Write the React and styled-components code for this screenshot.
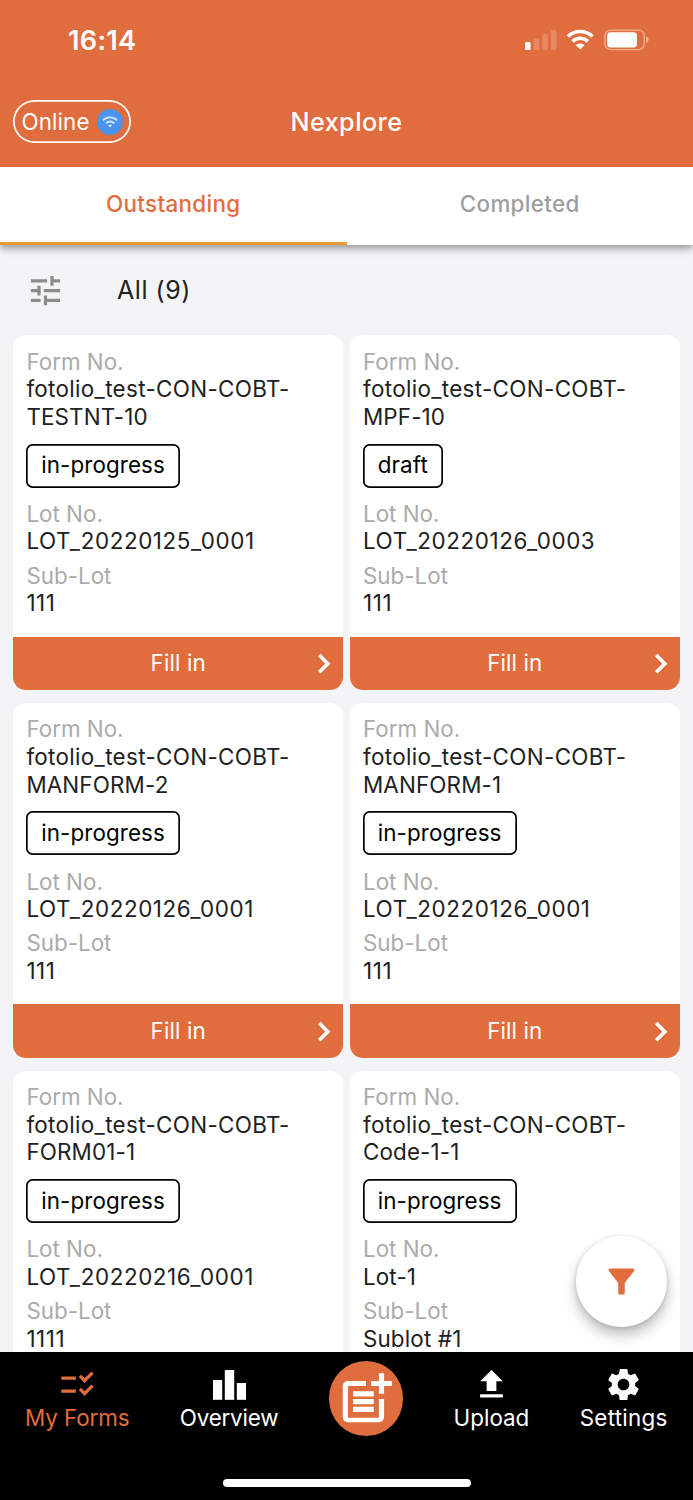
import React from 'react'
import styled, { createGlobalStyle, ThemeProvider } from 'styled-components'
import {
  MdTune,
  MdFilterAlt,
  MdChecklistRtl,
  MdPostAdd,
  MdSettings,
  MdUpload,
} from 'react-icons/md'

const theme = {
  orange: '#e06d3d',
  amber: '#e99a33',
  blue: '#4a94ec',
  grey: '#ababab',
  text: '#212121',
  page: '#f4f4f7',
}

const GlobalStyle = createGlobalStyle`
  * {
    box-sizing: border-box;
  }

  body {
    background: #f4f4f7;
    font-family: Inter, "Liberation Sans", sans-serif;
    margin: 0;
    overflow: hidden;
  }
`

const Screen = styled.div`
  background-color: ${props => props.theme.page};
  display: flex;
  flex-direction: column;
  height: 1500px;
  position: relative;
  width: 693px;
`

const Header = styled.header`
  background-color: ${props => props.theme.orange};
  color: #fff;
  flex: none;
  height: 166.7px;
  position: relative;
  z-index: 1;
`

const StatusBar = styled.div`
  align-items: center;
  display: flex;
  height: 79px;
  justify-content: space-between;
  padding: 0 44px 0 68px;
`

const Clock = styled.span`
  font-size: 27.2px;
  font-weight: 600;
  letter-spacing: 0.25px;
  padding-top: 1px;
`

const StatusIcons = styled.svg`
  display: block;
  height: 24px;
  width: 125px;
`

const AppBar = styled.div`
  align-items: center;
  display: grid;
  grid-template-columns: 1fr auto 1fr;
  height: 85px;
  padding: 0 13px;
`

const Online = styled.div`
  align-items: center;
  border-radius: 22px;
  box-shadow: inset 0 0 0 1.7px #fff;
  display: flex;
  font-size: 22.4px;
  height: 42.5px;
  justify-content: space-between;
  letter-spacing: 0.1px;
  line-height: 26px;
  padding: 0 7.6px 0 8.5px;
  width: 118px;
`

const OnlineDot = styled.svg`
  height: 26px;
  width: 26px;
`

const Title = styled.h1`
  font-size: 25.2px;
  font-weight: 500;
  letter-spacing: 0.45px;
  margin: 0;
`

const Tabs = styled.nav`
  background-color: #fff;
  box-shadow: 0 3px 8px rgba(0, 0, 0, 0.42);
  display: flex;
  flex: none;
  height: 78.3px;
`

const Tab = styled.div`
  align-items: center;
  border-bottom: 3.5px solid ${props => props.$active ? props.theme.amber : 'transparent'};
  color: ${props => props.$active ? props.theme.orange : '#9e9e9e'};
  display: flex;
  flex: 1;
  font-size: 22.4px;
  font-weight: 500;
  justify-content: center;
  letter-spacing: 0.35px;
  padding-bottom: 2px;
`

const Toolbar = styled.div`
  align-items: center;
  color: ${props => props.theme.text};
  display: flex;
  flex: none;
  font-size: 25px;
  gap: 52px;
  height: 90.5px;
  letter-spacing: 0.55px;
  padding-left: 26px;

  svg {
    color: #8c8c8c;
  }
`

const Grid = styled.main`
  align-content: start;
  display: grid;
  flex: 1;
  gap: 13.2px 6.6px;
  grid-template-columns: 330px 330px;
  min-height: 0;
  overflow: hidden;
  padding: 0 13.2px;
`

const Card = styled.article`
  background-color: #fff;
  border-radius: 13px;
  color: ${props => props.theme.text};
  display: flex;
  flex-direction: column;
  font-size: 22.4px;
  height: 354.5px;
  letter-spacing: 0.1px;
  line-height: 27.6px;
  overflow: hidden;
`

const CardBody = styled.div`
  flex: 1;
  padding: 12.3px 13.2px 0;
`

const Field = styled.div`
  margin-bottom: 6.6px;
`

const Label = styled.div`
  color: ${props => props.theme.grey};
  letter-spacing: 0;
`

const Value = styled.div`
  letter-spacing: ${props => props.$code ? '0.6px' : '0.15px'};
  white-space: pre-line;

  &::first-line {
    letter-spacing: ${props => props.$name ? '0.34px' : 'inherit'};
  }
`

const Badge = styled.span`
  align-items: center;
  border-radius: 6.6px;
  box-shadow: inset 0 0 0 1.7px #000;
  color: #000;
  display: inline-flex;
  height: 44px;
  margin: 6.6px 0 12.1px;
  padding: 0 15.4px 1px 14.8px;
`

const FillButton = styled.button`
  align-items: center;
  background-color: ${props => props.theme.orange};
  border: none;
  color: #fff;
  display: grid;
  flex: none;
  font: inherit;
  grid-template-columns: 39px 1fr 39px;
  height: 53.3px;
  letter-spacing: inherit;
  padding: 0;
  text-align: center;

  span {
    padding-bottom: 1px;
  }
`

const FilterButton = styled.button`
  align-items: center;
  background-color: #fff;
  border: none;
  border-radius: 50%;
  bottom: 173.5px;
  box-shadow: 0 8px 14px rgba(0, 0, 0, 0.26), 0 1px 4px rgba(0, 0, 0, 0.14);
  color: ${props => props.theme.orange};
  display: flex;
  height: 91px;
  justify-content: center;
  padding: 0;
  position: absolute;
  right: 26px;
  width: 91px;
`

const BottomBar = styled.footer`
  align-items: center;
  background-color: #000;
  display: flex;
  flex: none;
  flex-direction: column;
  height: 147.7px;
  justify-content: space-between;
  padding-bottom: 13px;
`

const NavItems = styled.nav`
  align-items: flex-start;
  display: flex;
  justify-content: space-between;
  padding: 9px 25.5px 0 25px;
  width: 100%;
`

const NavItem = styled.div`
  align-items: center;
  color: ${props => props.$active ? props.theme.orange : '#fff'};
  display: flex;
  flex-direction: column;
  font-size: 22.4px;
  letter-spacing: ${props => props.$spacing || '-0.1px'};
  line-height: 27px;
  padding-top: 3.5px;

  svg {
    display: block;
  }
`

const AddButton = styled.div`
  align-items: center;
  background-color: ${props => props.theme.orange};
  border-radius: 50%;
  color: #fff;
  display: flex;
  height: 74.5px;
  justify-content: center;
  width: 74.5px;
`

const HomeIndicator = styled.div`
  background-color: #fff;
  border-radius: 4px;
  height: 8.5px;
  width: 248px;
`

const forms = [
  { no: 'fotolio_test-CON-COBT-\nTESTNT-10', status: 'in-progress', lot: 'LOT_20220125_0001', subLot: '111' },
  { no: 'fotolio_test-CON-COBT-\nMPF-10', status: 'draft', lot: 'LOT_20220126_0003', subLot: '111' },
  { no: 'fotolio_test-CON-COBT-\nMANFORM-2', status: 'in-progress', lot: 'LOT_20220126_0001', subLot: '111' },
  { no: 'fotolio_test-CON-COBT-\nMANFORM-1', status: 'in-progress', lot: 'LOT_20220126_0001', subLot: '111' },
  { no: 'fotolio_test-CON-COBT-\nFORM01-1', status: 'in-progress', lot: 'LOT_20220216_0001', subLot: '1111' },
  { no: 'fotolio_test-CON-COBT-\nCode-1-1', status: 'in-progress', lot: 'Lot-1', subLot: 'Sublot #1' },
]

// signal, wifi and battery
const DeviceStatus = () => (
  <StatusIcons viewBox="0 0 125 24" fill="#fff">
    <rect x="1" y="14" width="5.6" height="8" rx="1.6" />
    <g opacity="0.2">
      <rect x="9.6" y="10.3" width="5.6" height="11.7" rx="1.6" />
      <rect x="18.2" y="6" width="5.6" height="16" rx="1.6" />
      <rect x="26.9" y="2" width="5.6" height="20" rx="1.6" />
    </g>
    <g fill="none" stroke="#fff" strokeWidth="3.7">
      <path d="M43.9 8.5C50.8 1.8 61.6 1.8 68.5 8.5" />
      <path d="M48.5 13.3C52.8 9.2 59.6 9.2 63.9 13.3" />
    </g>
    <path d="M56.2 21.6L51.8 17.1C54.3 14.9 58.1 14.9 60.6 17.1Z" />
    <rect x="81" y="2.1" width="39.2" height="19.5" rx="5.4" fill="none" stroke="#fff" strokeWidth="1.4" opacity="0.45" />
    <rect x="83.2" y="4.3" width="29.8" height="15.1" rx="3.4" />
    <path d="M122.2 8.5C125.2 9.6 125.2 14.1 122.2 15.2Z" opacity="0.5" />
  </StatusIcons>
)

const OnlineIcon = () => (
  <OnlineDot viewBox="0 0 26 26">
    <circle cx="13" cy="13" r="13" fill="#4a94ec" />
    <g fill="none" stroke="#fff" strokeWidth="1.9" opacity="0.75">
      <path d="M5.9 11.4C9.9 7.4 16.1 7.4 20.1 11.4" />
      <path d="M8.8 14.3C11.2 11.9 14.8 11.9 17.2 14.3" />
    </g>
    <path d="M13 18.3L11.2 16.5C12.2 15.6 13.8 15.6 14.8 16.5Z" fill="#fff" />
  </OnlineDot>
)

const ChevronIcon = () => (
  <svg width="39" height="39" viewBox="0 0 39 39" fill="none" stroke="#fff" strokeWidth="3.6">
    <path d="M15.2 11.1L23.8 19.7L15.2 28.3" />
  </svg>
)

const BarsIcon = () => (
  <svg width="39" height="39" viewBox="0 0 39 39" fill="currentColor">
    <rect x="3" y="15" width="9.2" height="19.8" />
    <rect x="14.8" y="5" width="9.4" height="29.8" />
    <rect x="26.8" y="18" width="9.2" height="16.8" />
  </svg>
)

/**
 * <FormCard>
 *
 * One form in the list, with its status and the fill in button
 *
 * @param { object } form - form number, status, lot and sub-lot
 */

const FormCard = ({ form }) => (
  <Card>
    <CardBody>
      <Field>
        <Label>Form No.</Label>
        <Value $name>{ form.no }</Value>
      </Field>
      <Badge>{ form.status }</Badge>
      <Field>
        <Label>Lot No.</Label>
        <Value $code={form.lot.startsWith('LOT_')}>{ form.lot }</Value>
      </Field>
      <Field>
        <Label>Sub-Lot</Label>
        <Value $code={form.subLot.startsWith('1')}>{ form.subLot }</Value>
      </Field>
    </CardBody>
    <FillButton>
      <i />
      <span>Fill in</span>
      <ChevronIcon />
    </FillButton>
  </Card>
)

const App = () => {
  return (
    <ThemeProvider theme={theme}>
      <GlobalStyle />
      <Screen>
        <Header>
          <StatusBar>
            <Clock>16:14</Clock>
            <DeviceStatus />
          </StatusBar>
          <AppBar>
            <Online>
              Online
              <OnlineIcon />
            </Online>
            <Title>Nexplore</Title>
          </AppBar>
        </Header>
        <Tabs>
          <Tab $active>Outstanding</Tab>
          <Tab>Completed</Tab>
        </Tabs>
        <Toolbar>
          <MdTune size={39} />
          <span>All (9)</span>
        </Toolbar>
        <Grid>
          { forms.map(form => <FormCard key={form.no} form={form} />) }
        </Grid>
        <BottomBar>
          <NavItems>
            <NavItem $active>
              <MdChecklistRtl size={39} />
              My Forms
            </NavItem>
            <NavItem $spacing="-0.2px">
              <BarsIcon />
              Overview
            </NavItem>
            <AddButton>
              <MdPostAdd size={62} />
            </AddButton>
            <NavItem $spacing="0">
              <MdUpload size={39} />
              Upload
            </NavItem>
            <NavItem $spacing="0.25px">
              <MdSettings size={39} />
              Settings
            </NavItem>
          </NavItems>
          <HomeIndicator />
        </BottomBar>
        <FilterButton aria-label="Filter">
          <MdFilterAlt size={39} />
        </FilterButton>
      </Screen>
    </ThemeProvider>
  )
}

export default App
